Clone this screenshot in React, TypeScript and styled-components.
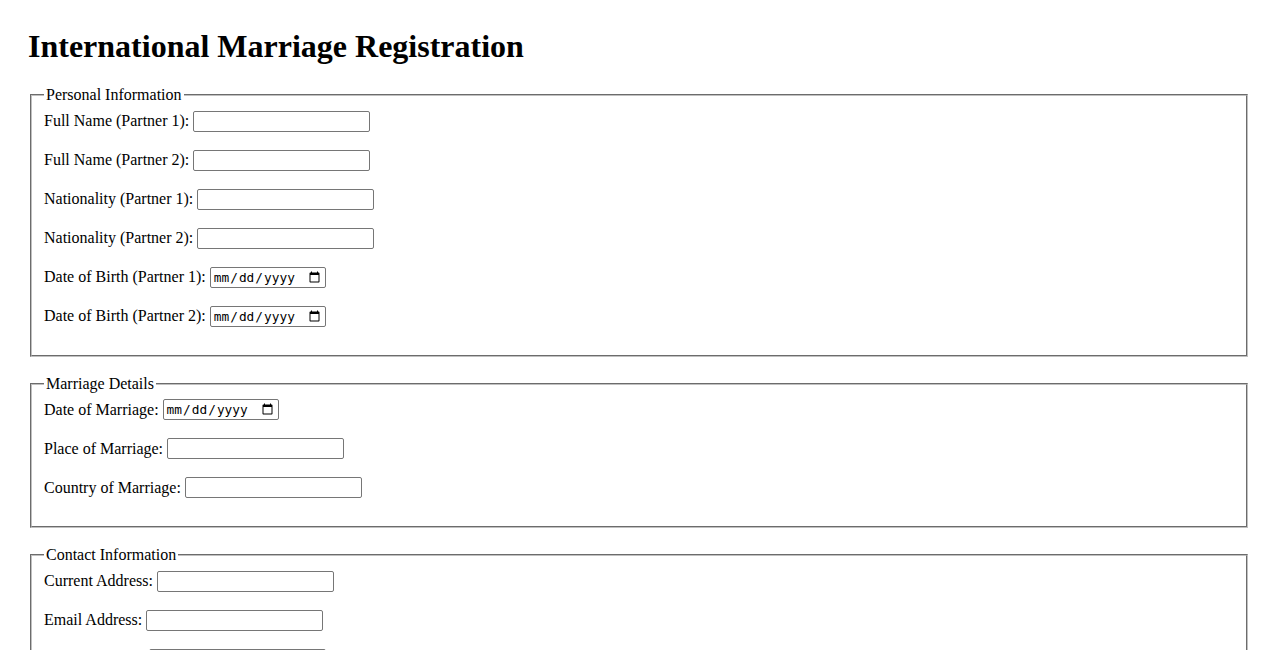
import React from "react";
import styled, { createGlobalStyle } from "styled-components";

const Global = createGlobalStyle`
  body {
    margin: 0;
    background: #fff;
    color: #000;
    font-family: "Liberation Serif", "Times New Roman", serif;
    font-size: 16px;
  }
`;

const sections = [
    {
        title: "Personal Information",
        fields: [
            { label: "Full Name (Partner 1):", type: "text" },
            { label: "Full Name (Partner 2):", type: "text" },
            { label: "Nationality (Partner 1):", type: "text" },
            { label: "Nationality (Partner 2):", type: "text" },
            { label: "Date of Birth (Partner 1):", type: "date" },
            { label: "Date of Birth (Partner 2):", type: "date" }
        ]
    },
    {
        title: "Marriage Details",
        fields: [
            { label: "Date of Marriage:", type: "date" },
            { label: "Place of Marriage:", type: "text" },
            { label: "Country of Marriage:", type: "text" }
        ]
    },
    {
        title: "Contact Information",
        fields: [
            { label: "Current Address:", type: "text" },
            { label: "Email Address:", type: "email" },
            { label: "Phone Number:", type: "tel" }
        ]
    }
];

export default () => {
    return (
        <Page>
            <Global />
            <Title>International Marriage Registration</Title>
            <form>
                {sections.map((section) => {
                    return (
                        <Fieldset key={section.title}>
                            <Legend>{section.title}</Legend>
                            {section.fields.map((field) => {
                                return (
                                    <Row key={field.label}>
                                        <Label>{field.label}</Label>
                                        {field.type === "date"
                                            ? <DateInput type="date" />
                                            : <TextInput type={field.type} />}
                                    </Row>
                                );
                            })}
                        </Fieldset>
                    );
                })}
            </form>
        </Page>
    );
};

const Page = styled.div`
  padding: 28px 28px 28px;
`;

const Title = styled.h1`
  margin: 0 0 21px;
  font-size: 32px;
  font-weight: bold;
  line-height: 37px;
`;

const Fieldset = styled.fieldset`
  margin: 0 2px 18px;
  padding: 6.6px 12px 10px;
  border: 2px groove #c0c0c0;
`;

const Legend = styled.legend`
  padding: 0 2px;
  font-size: 16px;
  line-height: 18px;
`;

const Row = styled.div`
  display: flex;
  align-items: center;
  gap: 4px;
  height: 21px;
  margin-bottom: 18px;
`;

const Label = styled.label`
  white-space: nowrap;
  line-height: 18px;
`;

const TextInput = styled.input`
  box-sizing: border-box;
  width: 177px;
  height: 21px;
  padding: 1px 2px;
  border: 1px solid #767676;
  border-radius: 2px;
  font-family: "Liberation Sans", Arial, sans-serif;
  font-size: 13px;
  background: #fff;
`;

const DateInput = styled.input`
  box-sizing: border-box;
  width: 116px;
  height: 21px;
  padding: 1px 2px;
  border: 1px solid #767676;
  border-radius: 2px;
  font-family: "DejaVu Sans Mono", "Liberation Mono", monospace;
  font-size: 12.8px;
  color: #000;
  background: #fff;
`;
